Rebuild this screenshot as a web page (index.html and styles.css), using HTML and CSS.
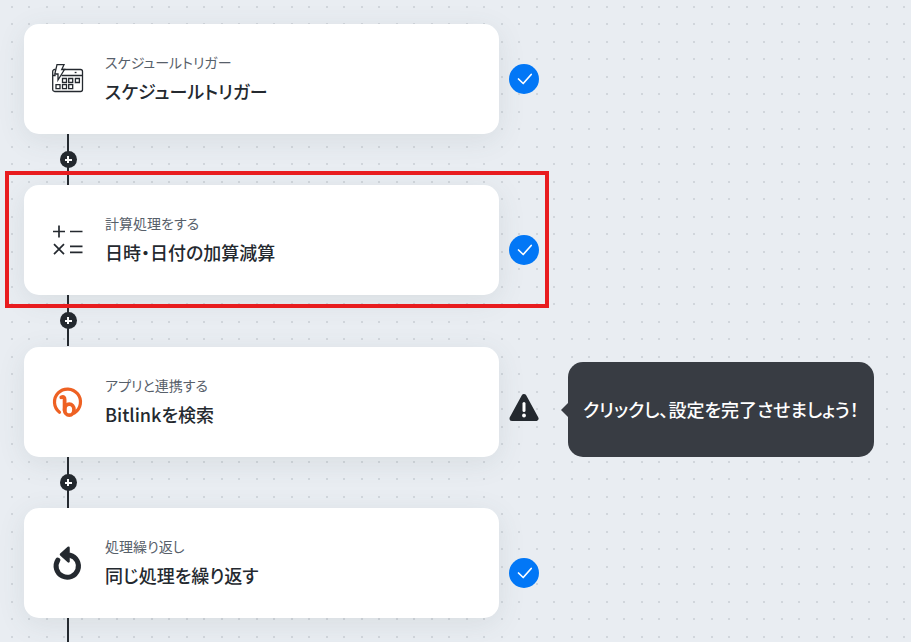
FILE: index.html
```html
<!DOCTYPE html>
<html lang="ja">
<head>
  <meta charset="UTF-8">
  <meta name="viewport" content="width=device-width, initial-scale=1.0">
  <title>フロー</title>
  <link rel="stylesheet" href="styles.css">
</head>
<body>

<main class="flow">

  <div class="step">
    <div class="step-body">
      <div class="card">
        <svg class="card-icon" viewBox="0 0 32 32" fill="none" stroke="#24292f" stroke-width="1.3">
          <path d="M10.500 6.500H28.500a2 2 0 0 1 2 2v18a2 2 0 0 1-2 2H2.700a2 2 0 0 1-2-2V8.500a2 2 0 0 1 2-2h1M9.500 12.500H30.500M.7 12.500h3"/>
          <path d="M5 1.700h7L9.700 6.500h2.800L6 17V11H2.800z" fill="#fff"/>
          <path d="M10.500 15.500h4v4h-4zM16.700 15.500h4v4h-4zM23.400 15.500h4v4h-4zM4 21.700h4v4H4zM10.500 21.700h4v4h-4zM16.700 21.700h4v4h-4z"/>
          <path d="M22.700 9.500h1.800"/>
        </svg>
        <div class="card-text">
          <p class="card-label">スケジュールトリガー</p>
          <h2 class="card-title">スケジュールトリガー</h2>
        </div>
      </div>
      <button class="status" type="button" aria-label="設定済み">
        <svg viewBox="0 0 30 30"><circle cx="15" cy="15" r="15" fill="#0277f6"/><path d="M9.500 15l4.700 4.500 8-9" fill="none" stroke="#fff" stroke-width="1.700" stroke-linecap="round" stroke-linejoin="round"/></svg>
      </button>
    </div>
  </div>

  <div class="connector">
    <button class="add" type="button" aria-label="追加"></button>
  </div>

  <div class="step">
    <div class="step-body">
      <div class="card">
        <svg class="card-icon" viewBox="0 0 32 32" fill="none" stroke="#24292f" stroke-width="1.700">
          <path d="M1 7.500h12M7 1.500v12M18 7.500h12.500M18 22.300h12.500M18 28.300h12.500M2 20.200l10 10M12 20.200l-10 10"/>
        </svg>
        <div class="card-text">
          <p class="card-label">計算処理をする</p>
          <h2 class="card-title">日時・日付の加算減算</h2>
        </div>
      </div>
      <button class="status status-low" type="button" aria-label="設定済み">
        <svg viewBox="0 0 30 30"><circle cx="15" cy="15" r="15" fill="#0277f6"/><path d="M9.500 15l4.700 4.500 8-9" fill="none" stroke="#fff" stroke-width="1.700" stroke-linecap="round" stroke-linejoin="round"/></svg>
      </button>
      <div class="highlight"></div>
    </div>
  </div>

  <div class="connector">
    <button class="add" type="button" aria-label="追加"></button>
  </div>

  <div class="step">
    <div class="step-body">
      <div class="card">
        <svg class="card-icon" viewBox="0 0 32 32" fill="none" stroke="#ee6123" stroke-linecap="round">
          <path d="M7.500 26.300A13 13 0 1 1 22.500 27" stroke-width="3.200"/>
          <path d="M9.300 11.300c2.400-.8 3.300 0 3.300 2.200v11" stroke-width="3.800"/>
          <ellipse cx="17.300" cy="23.700" rx="4.700" ry="5.500" stroke-width="3.700"/>
        </svg>
        <div class="card-text">
          <p class="card-label">アプリと連携する</p>
          <h2 class="card-title">Bitlinkを検索</h2>
        </div>
      </div>
      <button class="status status-warn" type="button" aria-label="未設定">
        <svg viewBox="0 0 30 30"><path d="M15 3.500L27 25.500H3z" fill="#24292f" stroke="#24292f" stroke-width="5" stroke-linejoin="round"/><path d="M15 10.500v7" stroke="#fff" stroke-width="3" stroke-linecap="round"/><circle cx="15" cy="22.500" r="1.900" fill="#fff"/></svg>
      </button>
    </div>
    <div class="tooltip">クリックし、設定を完了させましょう！</div>
  </div>

  <div class="connector">
    <button class="add" type="button" aria-label="追加"></button>
  </div>

  <div class="step">
    <div class="step-body">
      <div class="card">
        <svg class="card-icon" viewBox="0 0 32 32">
          <path d="M5.800 13.100A11.200 11.200 0 1 0 18 8.200" fill="none" stroke="#24292f" stroke-width="5" stroke-linecap="round"/>
          <path d="M16.500 .7L9 7.500L16.500 14.400z" fill="#24292f" stroke="#24292f" stroke-width="2.500" stroke-linejoin="round"/>
        </svg>
        <div class="card-text">
          <p class="card-label">処理繰り返し</p>
          <h2 class="card-title">同じ処理を繰り返す</h2>
        </div>
      </div>
      <button class="status status-low" type="button" aria-label="設定済み">
        <svg viewBox="0 0 30 30"><circle cx="15" cy="15" r="15" fill="#0277f6"/><path d="M9.500 15l4.700 4.500 8-9" fill="none" stroke="#fff" stroke-width="1.700" stroke-linecap="round" stroke-linejoin="round"/></svg>
      </button>
    </div>
  </div>

  <div class="connector connector-end"></div>

</main>

</body>
</html>
```
FILE: styles.css
```css
* {
  box-sizing: border-box;
}

body {
  margin: 0;
  min-height: 100vh;
  overflow: hidden;
  font-family: "Noto Sans CJK JP", sans-serif;
  font-feature-settings: "palt";
  color: #24292f;
  --dot: conic-gradient(at 2px 2px, transparent 75%, #d1d6dc 0);
  background-color: #e9edf2;
  background-image: var(--dot), var(--dot), var(--dot), var(--dot);
  background-size: 35px 35px;
  background-position: 11px 6px, 28px 6px, 11px 23px, 28px 23px;
}

.flow {
  padding: 24px 24px 0;
}

.step {
  display: flex;
  align-items: center;
  gap: 29px;
}

.step-body {
  position: relative;
  display: flex;
  align-items: center;
  gap: 10px;
  flex: 0 1 515px;
}

.card {
  flex: 1;
  display: flex;
  align-items: center;
  gap: 21px;
  min-height: 110px;
  padding: 16px 28px;
  background-color: #fff;
  border-radius: 15px;
  box-shadow: 0 6px 28px rgba(70, 90, 90, 0.1);
}

.card-icon {
  flex: none;
  width: 32px;
  height: 32px;
  overflow: visible;
}

.card-label,
.card-title {
  margin: 0;
}

.card-label {
  margin-bottom: 4px;
  font-size: 14px;
  line-height: 20px;
  color: #57606a;
}

.card-title {
  font-size: 18px;
  font-weight: 500;
  line-height: 30px;
}

.status {
  flex: none;
  width: 30px;
  padding: 0;
  border: none;
  background: none;
  cursor: pointer;
}

.status-low {
  padding-top: 19px;
}

.status-warn {
  padding-top: 12px;
}

.status svg {
  display: block;
  width: 30px;
  height: 30px;
}

/* frame over the selected step */
.highlight {
  position: absolute;
  inset: -14px -10px -13px -19px;
  border: 4px solid #e81c1f;
  pointer-events: none;
}

.connector {
  display: flex;
  justify-content: center;
  align-items: center;
  width: 88px;
  height: 51px;
  background: linear-gradient(#24292f, #24292f) center / 2px 100% no-repeat;
}

.connector-end {
  height: 25px;
}

.add {
  width: 17px;
  height: 17px;
  padding: 0;
  border: none;
  border-radius: 50%;
  background:
    linear-gradient(#fff, #fff) center / 7px 2px no-repeat,
    linear-gradient(#fff, #fff) center / 2px 7px no-repeat,
    #24292f;
  cursor: pointer;
}

.tooltip {
  position: relative;
  margin-top: 16px;
  padding: 32px 15px;
  border-radius: 15px;
  background-color: #383c43;
  color: #fff;
  font-size: 18px;
  font-weight: 500;
  line-height: 31px;
}

.tooltip::before {
  content: "";
  position: absolute;
  top: 50%;
  right: 100%;
  margin-top: -7px;
  border: 7px solid transparent;
  border-right-color: #383c43;
  border-left: 0;
}
```
